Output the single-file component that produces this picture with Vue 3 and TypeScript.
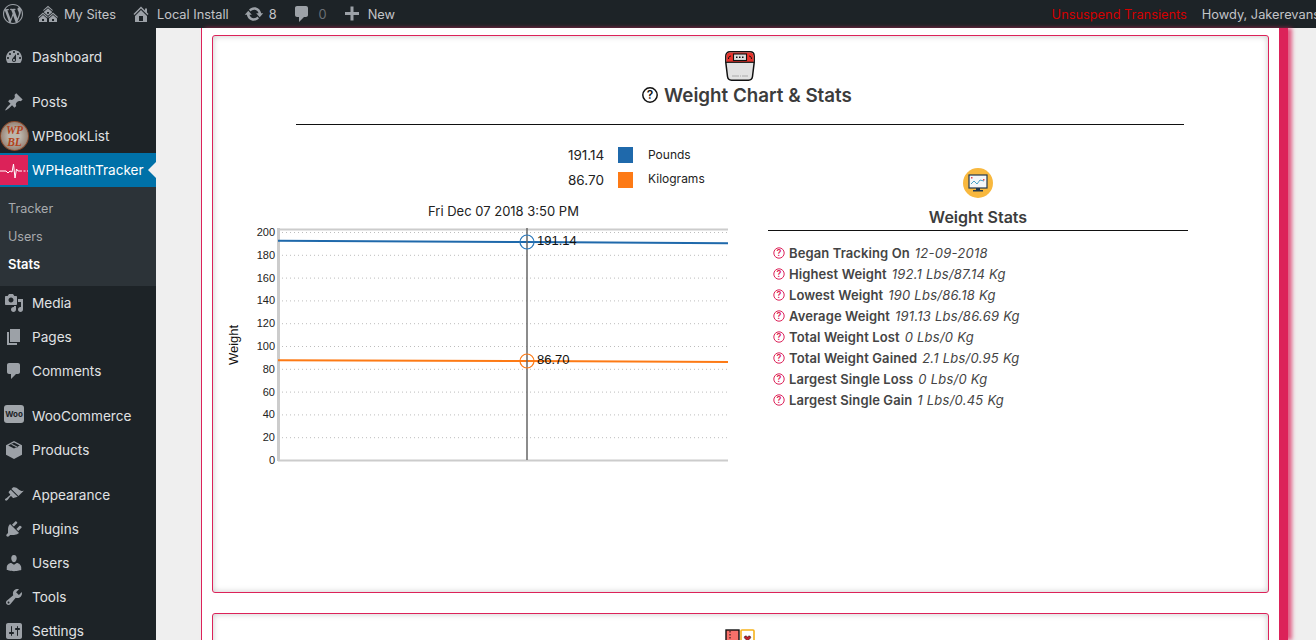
<script setup lang="ts">
type MenuItem = {
  label: string
  path?: string
  kind?: string
  gapBefore?: boolean
}

const icons = {
  wp: 'M20 10c0-5.51-4.49-10-10-10C4.48 0 0 4.49 0 10c0 5.52 4.48 10 10 10 5.51 0 10-4.48 10-10zM7.78 15.37L4.37 6.22c.55-.02 1.17-.08 1.17-.08.5-.06.44-1.13-.06-1.11 0 0-1.45.11-2.37.11-.18 0-.37 0-.58-.01C4.12 2.69 6.87 1.11 10 1.11c2.33 0 4.45.87 6.05 2.34-.68-.11-1.65.39-1.65 1.58 0 .74.45 1.36.9 2.1.35.61.55 1.36.55 2.46 0 1.49-1.4 5-1.4 5l-3.03-8.37c.54-.02.82-.17.82-.17.5-.05.44-1.25-.06-1.22 0 0-1.44.12-2.38.12-.87 0-2.33-.12-2.33-.12-.5-.03-.56 1.2-.06 1.22l.92.08 1.26 3.41zM17.41 10c.24-.64.74-1.87.43-4.25.7 1.29 1.05 2.71 1.05 4.25 0 3.29-1.73 6.24-4.4 7.78.97-2.59 1.94-5.2 2.92-7.78zM6.1 18.09C3.12 16.65 1.11 13.53 1.11 10c0-1.3.23-2.48.72-3.59C3.25 10.3 4.67 14.2 6.1 18.09zm4.03-6.63l2.58 6.98c-.86.29-1.76.45-2.71.45-.79 0-1.57-.11-2.29-.33.81-2.38 1.62-4.74 2.42-7.1z',
  sites: 'M14.27 6.87L10 3.14 5.73 6.87 5 6.14l5-4.38 5 4.38zM14 8.42l-4.05 3.43L6 8.38v-.74l4-3.5 4 3.5v.78zM11 9.7V8H9v1.7h2zm-1.73 4.03L5 10 .73 13.73 0 13l5-4.38L10 13zm10 0L15 10l-4.27 3.73L10 13l5-4.38L20 13zM5 11l4 3.5V18H1v-3.5zm10 0l4 3.5V18h-8v-3.5zM6 17v-2H4v2h2zm10 0v-2h-2v2h2z',
  home: 'M16 8.5l1.53 1.53-1.06 1.06L10 4.62l-6.47 6.47-1.06-1.06L10 2.5l4 4v-2h2v4zm-6-2.46l6 5.99V18H4v-5.97zM12 17v-5H8v5h4z',
  update: 'M10.2 3.28c3.53 0 6.43 2.61 6.92 6h2.08l-3.5 4-3.5-4h2.32c-.45-1.97-2.21-3.45-4.32-3.45-1.45 0-2.73.71-3.54 1.78L4.95 5.66C6.23 4.2 8.11 3.28 10.2 3.28zm-.4 13.44c-3.52 0-6.43-2.61-6.92-6H.8l3.5-4c1.17 1.33 2.33 2.67 3.5 4H5.48c.45 1.97 2.21 3.45 4.32 3.45 1.45 0 2.73-.71 3.54-1.78l1.71 1.95c-1.28 1.46-3.15 2.38-5.25 2.38z',
  comment: 'M5 2h9c1.1 0 2 .9 2 2v7c0 1.1-.9 2-2 2h-2l-5 5v-5H5c-1.1 0-2-.9-2-2V4c0-1.1.9-2 2-2z',
  plus: 'M17 8v3h-5.5v5.5h-3V11H3V8h5.5V2.5h3V8H17z',
  dashboard: 'M3.76 16h12.48c1.1-1.37 1.76-3.11 1.76-5 0-4.42-3.58-8-8-8s-8 3.58-8 8c0 1.89.66 3.63 1.76 5zM10 4c.55 0 1 .45 1 1s-.45 1-1 1-1-.45-1-1 .45-1 1-1zM6 6c.55 0 1 .45 1 1s-.45 1-1 1-1-.45-1-1 .45-1 1-1zm8 0c.55 0 1 .45 1 1s-.45 1-1 1-1-.45-1-1 .45-1 1-1zm-5.37 5.55L12 7v6c0 1.1-.9 2-2 2s-2-.9-2-2c0-.57.24-1.08.63-1.45zM4 10c.55 0 1 .45 1 1s-.45 1-1 1-1-.45-1-1 .45-1 1-1zm12 0c.55 0 1 .45 1 1s-.45 1-1 1-1-.45-1-1 .45-1 1-1zm-5 3c0-.55-.45-1-1-1s-1 .45-1 1 .45 1 1 1 1-.45 1-1z',
  pin: 'M10.44 3.02l1.82-1.82 6.36 6.35-1.83 1.82c-1.05-.68-2.48-.57-3.41.36l-.75.75c-.92.93-1.04 2.35-.35 3.41l-1.83 1.82-2.41-2.41-2.8 2.79c-.42.42-3.38 2.71-3.8 2.29s1.86-3.39 2.28-3.81l2.79-2.79L4.1 9.36l1.83-1.82c1.05.69 2.48.57 3.4-.36l.75-.75c.93-.92 1.05-2.35.36-3.41z',
  media: 'M13 11V4c0-.55-.45-1-1-1h-1.67L9 1H5L3.67 3H2c-.55 0-1 .45-1 1v7c0 .55.45 1 1 1h10c.55 0 1-.45 1-1zM7 4.5c1.38 0 2.5 1.12 2.5 2.5S8.38 9.5 7 9.5 4.5 8.38 4.5 7 5.62 4.5 7 4.5zM14 6h5v10.5c0 1.38-1.12 2.5-2.5 2.5S14 17.88 14 16.5s1.12-2.5 2.5-2.5c.17 0 .34.02.5.05V9h-3V6zm-4 8.05V13h2v3.5c0 1.38-1.12 2.5-2.5 2.5S7 17.88 7 16.5 8.12 14 9.5 14c.17 0 .34.02.5.05z',
  page: 'M6 15V2h10v13H6zm-1 1h8v2H3V5h2v11z',
  box: 'M10 1l8 4.2v9.6L10 19l-8-4.2V5.2L10 1zm0 1.6L4.2 5.6 10 8.6l5.8-3L10 2.6zM7 4.6l5.8 3 1.2-.6-5.8-3-1.2.6z',
  brush: 'M14.48 11.06L7.41 3.99l1.5-1.5c.5-.56 2.3-.47 3.51.32 1.21.8 1.43 1.28 2.91 2.1 1.18.64 2.45 1.26 4.45.85zm-.71.71L6.7 4.7 4.93 6.47c-.39.39-.39 1.02 0 1.41l1.06 1.06c.39.39.39 1.03 0 1.42-.6.6-1.43 1.11-2.21 1.69-.35.26-.7.53-1.01.84C1.43 13.23.4 14.4 1.31 15.3c.9.91 2.07-.12 2.4-.46.31-.31.58-.66.84-1.01.58-.78 1.09-1.61 1.69-2.21.39-.39 1.03-.39 1.42 0l1.06 1.06c.39.39 1.02.39 1.41 0z',
  plug: 'M13.11 4.36L9.87 7.6 8 5.73l3.24-3.24c.35-.34 1.05-.2 1.56.32.52.51.66 1.21.31 1.55zm-8 1.77l.91-1.12 9.01 9.01-1.19.84c-.71.71-2.63 1.16-3.82 1.16H6.14L4.9 17.26c-.59.59-1.54.59-2.12 0-.59-.58-.59-1.53 0-2.12l1.24-1.24v-3.88c0-1.13.4-3.19 1.09-3.89zm7.26 3.97l3.24-3.24c.34-.35 1.04-.21 1.55.31.52.51.66 1.21.31 1.55l-3.24 3.25z',
  user: 'M10 9.25c-2.27 0-2.73-3.44-2.73-3.44C7 4.02 7.82 2 9.97 2c2.16 0 2.98 2.02 2.71 3.81 0 0-.41 3.44-2.68 3.44zm0 2.57L12.72 10c2.39 0 4.52 2.33 4.52 4.53v2.49s-3.65 1.13-7.24 1.13c-3.65 0-7.24-1.13-7.24-1.13v-2.49c0-2.25 1.94-4.48 4.47-4.48z',
  tools: 'M16.68 9.77c-1.34 1.34-3.3 1.67-4.95.99l-5.41 6.52c-.99.99-2.59.99-3.58 0s-.99-2.59 0-3.57l6.52-5.42c-.68-1.65-.35-3.61.99-4.95 1.28-1.28 3.12-1.62 4.72-1.06l-2.89 2.89 2.82 2.82 2.86-2.87c.53 1.58.18 3.39-1.08 4.65zM3.81 16.21c.4.39 1.04.39 1.43 0 .4-.4.4-1.04 0-1.43-.39-.4-1.03-.4-1.43 0-.39.39-.39 1.03 0 1.43z',
  settings: 'M18 16V4c0-1.1-.9-2-2-2H4c-1.1 0-2 .9-2 2v12c0 1.1.9 2 2 2h12c1.1 0 2-.9 2-2zM8 11h1c.55 0 1 .45 1 1s-.45 1-1 1H8v1.5c0 .28-.22.5-.5.5s-.5-.22-.5-.5V13H6c-.55 0-1-.45-1-1s.45-1 1-1h1V5.5c0-.28.22-.5.5-.5s.5.22.5.5V11zm5-2h-1c-.55 0-1-.45-1-1s.45-1 1-1h1V5.5c0-.28.22-.5.5-.5s.5.22.5.5V7h1c.55 0 1 .45 1 1s-.45 1-1 1h-1v5.5c0 .28-.22.5-.5.5s-.5-.22-.5-.5V9z',
}

const menuTop: MenuItem[] = [
  { label: 'Dashboard', path: icons.dashboard },
  { label: 'Posts', path: icons.pin, gapBefore: true },
  { label: 'WPBookList', kind: 'book' },
]

const menuBottom: MenuItem[] = [
  { label: 'Media', path: icons.media },
  { label: 'Pages', path: icons.page },
  { label: 'Comments', path: icons.comment },
  { label: 'WooCommerce', kind: 'woo', gapBefore: true },
  { label: 'Products', path: icons.box },
  { label: 'Appearance', path: icons.brush, gapBefore: true },
  { label: 'Plugins', path: icons.plug },
  { label: 'Users', path: icons.user },
  { label: 'Tools', path: icons.tools },
  { label: 'Settings', path: icons.settings },
]

const stats = [
  { label: 'Began Tracking On', value: '12-09-2018' },
  { label: 'Highest Weight', value: '192.1 Lbs/87.14 Kg' },
  { label: 'Lowest Weight', value: '190 Lbs/86.18 Kg' },
  { label: 'Average Weight', value: '191.13 Lbs/86.69 Kg' },
  { label: 'Total Weight Lost', value: '0 Lbs/0 Kg' },
  { label: 'Total Weight Gained', value: '2.1 Lbs/0.95 Kg' },
  { label: 'Largest Single Loss', value: '0 Lbs/0 Kg' },
  { label: 'Largest Single Gain', value: '1 Lbs/0.45 Kg' },
]

const ticks = [0, 20, 40, 60, 80, 100, 120, 140, 160, 180, 200]

function tickY(value: number): number {
  return 460 - value * 1.14
}
</script>

<template>
  <div class="page">
    <header class="adminbar">
      <div class="bar-left">
        <svg class="bar-icon wp" viewBox="0 0 20 20"><path :d="icons.wp" /></svg>
        <span class="bar-item my-sites"><svg class="bar-icon" viewBox="0 0 20 20"><path :d="icons.sites" /></svg>My Sites</span>
        <span class="bar-item local"><svg class="bar-icon" viewBox="0 0 20 20"><path :d="icons.home" /></svg>Local Install</span>
        <span class="bar-item updates"><svg class="bar-icon" viewBox="0 0 20 20"><path :d="icons.update" /></svg>8</span>
        <span class="bar-item comments"><svg class="bar-icon" viewBox="0 0 20 20"><path :d="icons.comment" /></svg><span class="muted">0</span></span>
        <span class="bar-item new"><svg class="bar-icon" viewBox="0 0 20 20"><path :d="icons.plus" /></svg>New</span>
      </div>
      <div class="bar-right">
        <span class="transients">Unsuspend Transients</span>
        <span class="howdy">Howdy, Jakerevans</span>
      </div>
    </header>

    <div class="body-row">
      <nav class="sidebar">
        <div
          v-for="item in menuTop"
          :key="item.label"
          class="menu-item"
          :class="{ spaced: item.gapBefore }"
        >
          <span class="menu-icon">
            <svg v-if="item.path" viewBox="0 0 20 20"><path :d="item.path" /></svg>
            <span v-else class="book-badge"><span>WP</span><span>BL</span></span>
          </span>
          {{ item.label }}
        </div>

        <div class="menu-item active">
          <span class="pulse-box">
            <svg viewBox="0 0 28 30">
              <polyline points="0,16 6,16 8,18 10,16 12,17 13.5,9 15,23 16.5,14 18,16 20,16" />
              <path class="dashes" d="M20 16h8" />
            </svg>
          </span>
          WPHealthTracker
          <span class="active-arrow"></span>
        </div>
        <div class="submenu">
          <div class="sub-item">Tracker</div>
          <div class="sub-item">Users</div>
          <div class="sub-item current">Stats</div>
        </div>

        <div
          v-for="item in menuBottom"
          :key="item.label"
          class="menu-item"
          :class="{ spaced: item.gapBefore }"
        >
          <span class="menu-icon">
            <svg v-if="item.path" viewBox="0 0 20 20"><path :d="item.path" /></svg>
            <span v-else class="woo-badge">Woo</span>
          </span>
          {{ item.label }}
        </div>
      </nav>

      <main class="content">
        <div class="panel">
          <section class="card first">
            <svg class="card-icon" viewBox="0 0 30 30">
              <path d="M5 .8h20c2.6 0 4.2 1.6 4.2 4.2v6.500L27.500 25.500c-.3 2.300-1.700 3.700-4 3.700h-17c-2.300 0-3.700-1.400-4-3.700L.8 11.500V5C.8 2.400 2.400.8 5 .8z" fill="#e2e2e2" stroke="#111" stroke-width="1.5" />
              <path d="M1.5 11V5c0-2.200 1.300-3.500 3.500-3.500h20c2.200 0 3.500 1.300 3.500 3.500v6z" fill="#e8332c" />
              <path d="M1 11.3h28" stroke="#111" stroke-width="1.2" />
              <rect x="8.5" y="3" width="13" height="6.5" fill="#ddd" stroke="#111" stroke-width="1.1" />
              <path d="M11 6.3h8" stroke="#111" stroke-width="1.5" stroke-dasharray="1.5 1.5" />
              <path d="M3.5 8c0-2 1-3 2.500-3M26.500 8c0-2-1-3-2.500-3" fill="none" stroke="#111" />
              <path d="M7 25h16" stroke="#aaa" stroke-dasharray="7 1 1 1" />
            </svg>
            <h2 class="card-title">
              <svg class="help-dark" viewBox="0 0 16 16">
                <circle cx="8" cy="8" r="7.2" />
                <text x="8" y="12">?</text>
              </svg>
              Weight Chart &amp; Stats
            </h2>
            <div class="title-rule"></div>

            <div class="columns">
              <div class="chart-col">
                <div class="legend-row">
                  <span class="legend-value">191.14</span>
                  <span class="swatch blue"></span>
                  <span class="legend-name">Pounds</span>
                </div>
                <div class="legend-row second">
                  <span class="legend-value">86.70</span>
                  <span class="swatch orange"></span>
                  <span class="legend-name">Kilograms</span>
                </div>
                <div class="chart-date">Fri Dec 07 2018 3:50 PM</div>
                <svg class="chart" viewBox="222 222 506 248" width="506" height="248">
                  <line
                    v-for="tick in ticks.slice(1)"
                    :key="'grid' + tick"
                    class="grid"
                    x1="282"
                    x2="728"
                    :y1="tickY(tick) + 0.5"
                    :y2="tickY(tick) + 0.5"
                  />
                  <text
                    v-for="tick in ticks"
                    :key="'tick' + tick"
                    class="tick"
                    x="275"
                    :y="tickY(tick) + 4"
                  >{{ tick }}</text>
                  <line class="frame" x1="278" x2="728" y1="229.5" y2="229.5" />
                  <line class="frame" x1="278" x2="728" y1="460.5" y2="460.5" />
                  <line class="frame axis" x1="278.5" x2="278.5" y1="228" y2="461" />
                  <text class="axis-name" transform="translate(238 345) rotate(-90)">Weight</text>
                  <path class="series pounds" d="M278 240.7 L527 242 L728 243.3" />
                  <path class="series kilos" d="M278 360.3 L527 361 L728 362" />
                  <line class="cursor" x1="527" x2="527" y1="228" y2="460" />
                  <circle class="marker pounds" cx="527" cy="242" r="7" />
                  <circle class="marker kilos" cx="527" cy="361" r="7" />
                  <text class="point-label" x="537" y="245">191.14</text>
                  <text class="point-label" x="537" y="364">86.70</text>
                </svg>
              </div>

              <div class="stats-col">
                <svg class="stats-icon" viewBox="0 0 30 30">
                  <circle cx="15" cy="15" r="15" fill="#f8b83e" />
                  <rect x="6" y="7" width="18" height="13" fill="#f4f6f8" stroke="#22384d" stroke-width="1.2" />
                  <path d="M8 16l3-3 3 3 3-4 4 1" fill="none" stroke="#4aa3c7" />
                  <rect x="8" y="9" width="1.5" height="1.5" fill="#e8434f" />
                  <rect x="20" y="11" width="1.5" height="1.5" fill="#e8434f" />
                  <path d="M13 20h4v2h-4zM10 22h10v1.5H10z" fill="#22384d" />
                </svg>
                <h3 class="stats-title">Weight Stats</h3>
                <ul class="stats-list">
                  <li v-for="row in stats" :key="row.label" class="stat-row">
                    <svg class="help-pink" viewBox="0 0 12 12">
                      <circle cx="6" cy="6" r="5.2" />
                      <text x="6" y="9">?</text>
                    </svg>
                    <b>{{ row.label }}</b>
                    <i>{{ row.value }}</i>
                  </li>
                </ul>
              </div>
            </div>
          </section>

          <section class="card second-card">
            <svg class="card-icon" viewBox="0 0 30 30">
              <rect x="1" y="1" width="13" height="28" fill="#f8706a" stroke="#111" stroke-width="1.4" />
              <path d="M5 2v26" stroke="#111" stroke-dasharray="1.5 1.5" />
              <rect x="16" y="1" width="13" height="28" rx="1" fill="#fff" stroke="#f6b21b" stroke-width="1.6" />
              <path d="M22.5 12l-3-3c-1-1.5 1.5-3 3-1 1.5-2 4-.5 3 1z" fill="#c2202c" stroke="#111" stroke-width=".6" />
            </svg>
          </section>
        </div>
      </main>
    </div>
  </div>
</template>

<style scoped>
.page {
  width: 1316px;
  height: 640px;
  overflow: hidden;
  font-family: Inter, "Noto Sans", sans-serif;
  background: #efefef;
}

.adminbar {
  height: 28px;
  background: #1d2327;
  color: #c3c4c7;
  font-size: 12.8px;
  display: flex;
  justify-content: space-between;
  align-items: center;
}

.bar-left {
  display: flex;
  align-items: center;
  padding-left: 3px;
}

.bar-right {
  display: flex;
  white-space: nowrap;
  margin-right: -4px;
}

.bar-item {
  display: flex;
  align-items: center;
}

.bar-icon {
  width: 20px;
  height: 20px;
  fill: #9ca1a7;
  flex: none;
}

.my-sites {
  margin-left: 15px;
  gap: 6px;
}

.local {
  margin-left: 15px;
  gap: 6px;
}

.updates {
  margin-left: 15px;
  gap: 5px;
}

.comments {
  margin-left: 15px;
  gap: 7px;
}

.muted {
  color: #6b7075;
}

.new {
  margin-left: 15px;
  gap: 6px;
}

.transients {
  color: #d40000;
  margin-right: 15px;
}

.body-row {
  display: flex;
  height: 612px;
}

.sidebar {
  width: 156px;
  flex: none;
  background: #1d2327;
  padding-top: 12px;
  color: #e0e2e4;
  font-size: 13.6px;
  box-sizing: border-box;
}

.menu-item {
  position: relative;
  height: 34px;
  display: flex;
  align-items: center;
  padding: 0 0 1px 32px;
  box-sizing: border-box;
  white-space: nowrap;
}

.menu-item.spaced {
  margin-top: 11px;
}

.menu-icon {
  position: absolute;
  left: 4px;
  top: 7px;
  width: 20px;
  height: 20px;
}

.menu-icon svg {
  display: block;
  width: 20px;
  height: 20px;
  fill: #9ca1a7;
}

.book-badge {
  position: absolute;
  left: -4px;
  top: -5px;
  width: 29px;
  height: 30px;
  border-radius: 50%;
  background: radial-gradient(circle, #bcb6ad 30%, #8d7566 85%);
  border: 1px solid #8a4a2c;
  box-sizing: border-box;
  color: #b4431d;
  font: italic 700 11.5px/12px "Liberation Serif", serif;
  display: flex;
  flex-direction: column;
  align-items: center;
  justify-content: center;
}

.woo-badge {
  position: absolute;
  left: 0;
  top: -1px;
  width: 20px;
  height: 18px;
  border-radius: 3px;
  background: #a0a5aa;
  color: #1d2327;
  font-size: 8px;
  font-weight: 700;
  line-height: 18px;
  text-align: center;
}

.active {
  background: #0071a8;
  color: #fff;
}

.pulse-box {
  position: absolute;
  left: 0;
  top: 2px;
  width: 28px;
  height: 30px;
  background: #dc2259;
}

.pulse-box svg {
  display: block;
  width: 28px;
  height: 30px;
  fill: none;
  stroke: #fff;
  stroke-width: 1;
}

.dashes {
  stroke-dasharray: 2 1.5;
}

.active-arrow {
  position: absolute;
  right: 0;
  top: 9px;
  border: 8px solid transparent;
  border-left-width: 0;
  border-right-color: #efefef;
}

.submenu {
  background: #2c3338;
  padding: 8px 0 7px;
}

.sub-item {
  height: 28px;
  line-height: 28px;
  padding-left: 8px;
  font-size: 12.6px;
  color: #a7aaad;
}

.sub-item.current {
  color: #fff;
  font-weight: 600;
  font-size: 13px;
  line-height: 26px;
}

.content {
  flex: 1;
  padding-left: 45px;
  min-width: 0;
  box-sizing: border-box;
}

.panel {
  height: 612px;
  background: #fff;
  border-left: 1px solid #dc2259;
  border-right: 9px solid #dc2259;
  box-shadow: 4px 0 4px rgba(220, 34, 89, 0.7);
  padding: 7px 10px 0;
  box-sizing: border-box;
  width: 1087px;
  overflow: hidden;
}

.card {
  border: 1px solid #dc2259;
  border-radius: 3px;
  box-shadow: inset 0 0 6px rgba(0, 0, 0, 0.22);
  background: #fff;
  box-sizing: border-box;
  text-align: center;
  padding: 15px 1px 0 0;
}

.first {
  height: 558px;
  margin-bottom: 20px;
}

.second-card {
  height: 60px;
}

.card-icon {
  display: block;
  width: 30px;
  height: 30px;
  margin: 0 auto;
}

.card-title {
  margin: 0;
  height: 28px;
  display: flex;
  align-items: center;
  justify-content: center;
  gap: 6px;
  padding-left: 14px;
  font-size: 18.8px;
  font-weight: 600;
  color: #3c3c3c;
}

.help-dark {
  width: 16px;
  height: 16px;
  fill: none;
  stroke: #111;
  stroke-width: 1.5;
}

.help-dark text {
  fill: #111;
  stroke: none;
  font-size: 12px;
  font-weight: 600;
  text-anchor: middle;
}

.title-rule {
  width: 888px;
  height: 1px;
  margin: 15px auto 0;
  background: #111;
}

.columns {
  display: grid;
  grid-template-columns: 506px 420px;
  column-gap: 40px;
  padding-left: 9px;
  text-align: left;
}

.chart-col {
  padding-top: 22px;
}

.legend-row {
  height: 16px;
  display: flex;
  align-items: center;
  padding-left: 346px;
  font-size: 13.5px;
  color: #222;
}

.legend-row.second {
  margin-top: 9px;
}

.legend-value {
  width: 50px;
  flex: none;
}

.swatch {
  width: 15px;
  height: 16px;
  flex: none;
}

.blue {
  background: #1f69ab;
}

.orange {
  background: #fd7a15;
}

.legend-name {
  margin-left: 15px;
  font-size: 12px;
  position: relative;
  top: -1px;
}

.second .legend-name {
  top: -2px;
}

.chart-date {
  height: 16px;
  line-height: 16px;
  margin-top: 15px;
  padding-left: 206px;
  font-size: 13px;
  color: #222;
}

.chart {
  display: block;
  margin-top: 3px;
}

.grid {
  stroke: #bdbdbd;
  stroke-dasharray: 1 3;
}

.tick {
  font: 11px "Liberation Sans", sans-serif;
  fill: #222;
  text-anchor: end;
}

.frame {
  stroke: #ccc;
  stroke-width: 2;
}

.axis {
  stroke-width: 3;
}

.axis-name {
  font: 13px "Liberation Sans", sans-serif;
  fill: #111;
  text-anchor: middle;
}

.series {
  fill: none;
  stroke-width: 2;
}

.series.pounds {
  stroke: #1f69ab;
}

.series.kilos {
  stroke: #fd7a15;
}

.cursor {
  stroke: #666;
  stroke-width: 1.5;
}

.marker {
  fill: none;
  stroke-width: 1.2;
}

.marker.pounds {
  stroke: #2a78bb;
}

.marker.kilos {
  stroke: #fd7a15;
}

.point-label {
  font: 13px "Liberation Sans", sans-serif;
  fill: #111;
}

.stats-col {
  padding-top: 43px;
}

.stats-icon {
  display: block;
  width: 30px;
  height: 30px;
  margin: 0 auto;
}

.stats-title {
  margin: 9px 0 0;
  height: 20px;
  line-height: 20px;
  padding-bottom: 3px;
  border-bottom: 1px solid #111;
  box-sizing: content-box;
  text-align: center;
  font-size: 16px;
  font-weight: 600;
  color: #3c3c3c;
}

.stats-list {
  list-style: none;
  margin: 11px 0 0;
  padding: 0 0 0 5px;
}

.stat-row {
  height: 21px;
  display: flex;
  align-items: center;
  font-size: 13px;
  letter-spacing: 0.1px;
  color: #444;
  white-space: nowrap;
}

.stat-row b {
  font-weight: 600;
  margin-left: 4px;
}

.stat-row i {
  margin-left: 5px;
  letter-spacing: 0.25px;
}

.help-pink {
  width: 12px;
  height: 12px;
  flex: none;
  fill: none;
  stroke: #dc2259;
}

.help-pink text {
  fill: #dc2259;
  stroke: none;
  font-size: 9px;
  font-weight: 600;
  text-anchor: middle;
}
</style>

<style>
html,
body {
  margin: 0;
  overflow: hidden;
}
</style>
